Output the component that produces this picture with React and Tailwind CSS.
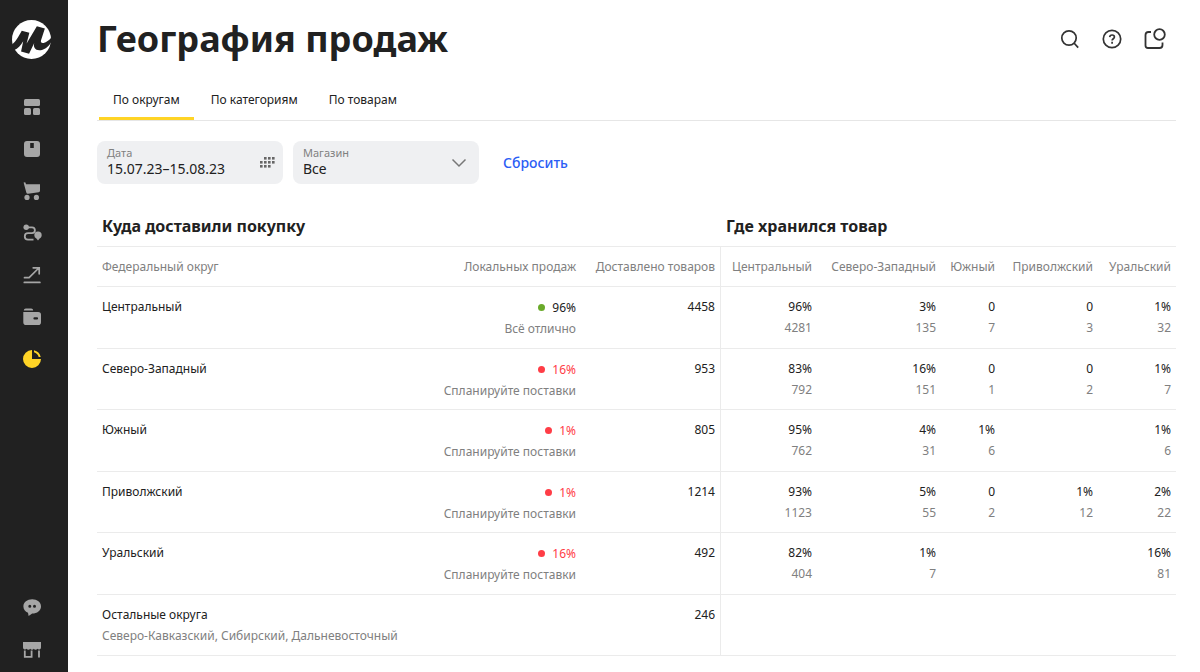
import React, { useState } from 'react';

const navItems = [
    {
        name: 'Сводка',
        icon: (
            <>
                <rect x="1" y="1" width="16" height="7" rx="1.5" />
                <rect x="1" y="10" width="7" height="7" rx="1.5" />
                <rect x="10" y="10" width="7" height="7" rx="1.5" />
            </>
        ),
    },
    {
        name: 'Товары',
        icon: <path fillRule="evenodd" d="M4 1h10a3 3 0 0 1 3 3v10a3 3 0 0 1-3 3H4a3 3 0 0 1-3-3V4a3 3 0 0 1 3-3zm3.2 2v5h3.6V3z" />,
    },
    {
        name: 'Заказы',
        icon: (
            <>
                <path d="M.6.6 2.2.3l.9 2H17v6.4a1.6 1.6 0 0 1-1.3 1.5L5 11.8a1.6 1.6 0 0 1-1.7-1.2z" />
                <circle cx="4" cy="15.4" r="2.6" />
                <circle cx="13.4" cy="15.4" r="2.6" />
            </>
        ),
    },
    {
        name: 'Логистика',
        icon: (
            <>
                <circle cx="3.2" cy="3.2" r="2.7" />
                <path
                    d="M4 3.4h5a2.9 2.9 0 0 1 0 5.800H5a3.200 3.200 0 0 0 0 6.400h5.500"
                    fill="none"
                    stroke="currentColor"
                    strokeWidth="1.800"
                />
                <path d="M15 7.600a3.700 3.700 0 0 1 3.700 3.700c0 1.500-.9 2.800-2.100 3.300L15 16.600l-1.600-2A3.600 3.600 0 0 1 11.300 11.300 3.700 3.700 0 0 1 15 7.600z" />
            </>
        ),
    },
    {
        name: 'Продвижение',
        icon: (
            <path
                d="M1.500 11.700h4.600L15.800 2M10.200 1.800h6v6M1.300 16.400h15.600"
                fill="none"
                stroke="currentColor"
                strokeWidth="1.700"
                strokeLinecap="round"
            />
        ),
    },
    {
        name: 'Финансы',
        icon: (
            <>
                <path d="M2.800.6h5.400a2 2 0 0 1 2 1.900H.8A2 2 0 0 1 2.800.6z" />
                <path
                    fillRule="evenodd"
                    d="M.3 4h14.900A2.800 2.800 0 0 1 18 6.800v7.400a2.800 2.800 0 0 1-2.800 2.800H3.100A2.800 2.800 0 0 1 .3 14.200zM11.500 9.300a1 1 0 0 0 0 2.200H14a1 1 0 0 0 0-2.200z"
                />
            </>
        ),
    },
    {
        name: 'Аналитика',
        active: true,
        icon: (
            <>
                <path d="M9 0v9h9a9 9 0 1 1-9-9z" />
                <path d="M11 .3A9 9 0 0 1 17.700 7h-2A7 7 0 0 0 11 2.300z" />
            </>
        ),
    },
];

const bottomItems = [
    {
        name: 'Чаты',
        icon: (
            <path
                fillRule="evenodd"
                d="M9.200.3c4.900 0 8.800 3 8.800 7.100s-3.900 7.100-8.800 7.100L5.600 17.100 5 13.700C2.200 12.600.4 10.300.4 7.400.4 3.300 4.300.3 9.200.3zM6.800 5.700a1.500 1.500 0 1 0 0 3 1.500 1.500 0 0 0 0-3zm4.700 0a1.500 1.500 0 1 0 0 3 1.500 1.500 0 0 0 0-3z"
            />
        ),
    },
    {
        name: 'Магазины',
        icon: (
            <>
                <path d="M0 1h18v5.500a2 2 0 0 1-3.600 1.200 2.200 2.200 0 0 1-3.600 0 2.200 2.200 0 0 1-3.600 0 2.200 2.200 0 0 1-3.600 0A2 2 0 0 1 0 6.500z" />
                <path d="M1.800 9.500v6.300h6.800V9.500M16 9.500v7" fill="none" stroke="currentColor" strokeWidth="1.800" />
            </>
        ),
    },
];

const tabs = ['По округам', 'По категориям', 'По товарам'];

const columns = ['Центральный', 'Северо-Западный', 'Южный', 'Приволжский', 'Уральский'];

const rows = [
    {
        name: 'Центральный',
        local: '96%',
        status: 'Всё отлично',
        good: true,
        total: '4458',
        stock: [['96%', '4281'], ['3%', '135'], ['0', '7'], ['0', '3'], ['1%', '32']],
    },
    {
        name: 'Северо-Западный',
        local: '16%',
        status: 'Спланируйте поставки',
        total: '953',
        stock: [['83%', '792'], ['16%', '151'], ['0', '1'], ['0', '2'], ['1%', '7']],
    },
    {
        name: 'Южный',
        local: '1%',
        status: 'Спланируйте поставки',
        total: '805',
        stock: [['95%', '762'], ['4%', '31'], ['1%', '6'], null, ['1%', '6']],
    },
    {
        name: 'Приволжский',
        local: '1%',
        status: 'Спланируйте поставки',
        total: '1214',
        stock: [['93%', '1123'], ['5%', '55'], ['0', '2'], ['1%', '12'], ['2%', '22']],
    },
    {
        name: 'Уральский',
        local: '16%',
        status: 'Спланируйте поставки',
        total: '492',
        stock: [['82%', '404'], ['1%', '7'], null, null, ['16%', '81']],
    },
    {
        name: 'Остальные округа',
        note: 'Северо-Кавказский, Сибирский, Дальневосточный',
        total: '246',
        stock: [null, null, null, null, null],
    },
];

const NavLink = ({ item }) => (
    <a href="#" aria-label={item.name} className={item.active ? 'text-[#ffd426]' : 'text-[#a6a6a6]'}>
        <svg viewBox="0 0 18 18" fill="currentColor" className="block h-[18px] w-[18px] overflow-visible">
            {item.icon}
        </svg>
    </a>
);

const Sidebar = () => (
    <aside className="flex w-[68px] shrink-0 flex-col items-center bg-[#212121] pr-[5px] pt-5 pb-[13px]">
        <a href="#" aria-label="Маркет">
            <svg viewBox="0 0 40 40" className="block h-[39px] w-[39px]">
                <circle cx="20" cy="20" r="20" fill="#fff" />
                <path
                    d="M0 25C4 22.500 6.500 17 10 11l7.800 2.200L15 24 25.500 6.500l8.200 2.300-3.900 12c-.7 2.200.6 3.200 2.600 2.700 3-.8 5.400-2.500 7.600-5V23c-3 4.800-7.300 8-12 8-4.300 0-6.400-3.300-5.200-7.400L17.500 34.500 9.300 32.200 11.500 21.800C8.800 26 6.200 29.500 2 31z"
                    fill="#212121"
                />
            </svg>
        </a>
        <nav className="mt-[39px] flex flex-col gap-6">
            {navItems.map(item => <NavLink key={item.name} item={item} />)}
        </nav>
        <nav className="mt-auto flex flex-col gap-6">
            {bottomItems.map(item => <NavLink key={item.name} item={item} />)}
        </nav>
    </aside>
);

const HeaderActions = () => (
    <div className="flex items-center gap-[22px] pr-2.5 text-[#333]">
        <button aria-label="Поиск">
            <svg viewBox="0 0 20 20" fill="none" stroke="currentColor" strokeWidth="1.700" className="block h-5 w-5">
                <circle cx="9" cy="9" r="7.200" />
                <path d="M14 14l4.200 4.600" />
            </svg>
        </button>
        <button aria-label="Помощь">
            <svg viewBox="0 0 20 20" fill="none" stroke="currentColor" strokeWidth="1.700" className="block h-5 w-5">
                <circle cx="10" cy="10" r="8.700" />
                <path d="M7.700 8.100c.1-1.400 1-2.100 2.400-2.100s2.300.8 2.300 2c0 1.700-2.300 1.800-2.300 3.600M10.100 12.800v1.900" />
            </svg>
        </button>
        <button aria-label="Уведомления">
            <svg viewBox="0 0 22 22" fill="none" stroke="currentColor" strokeWidth="1.800" className="block h-[22px] w-[22px]">
                <path d="M7 4H4.500Q1.500 4 1.500 7v10.500q0 2.500 2.500 2.500h11.500q3 0 3-3v-2.500" />
                <circle cx="15.500" cy="6.500" r="5.300" />
            </svg>
        </button>
    </div>
);

const Filters = () => (
    <div className="mt-5 flex items-center gap-2.5">
        <div className="relative h-[43px] w-[186px] rounded-lg bg-[#eff0f2] px-2.5 pt-1">
            <label htmlFor="date" className="block text-[11px] leading-4 text-[#808080]">Дата</label>
            <input
                id="date"
                type="text"
                defaultValue="15.07.23–15.08.23"
                className="block w-full bg-transparent text-sm leading-4 text-[#212121] outline-none"
            />
            <svg viewBox="0 0 15 11" fill="#666" className="pointer-events-none absolute top-4 right-2 h-[11px] w-[15px]">
                {[4, 8, 12].map(x => <rect key={x} x={x} y="0" width="2.600" height="2.600" />)}
                {[0, 4, 8, 12].map(x => <rect key={x} x={x} y="4" width="2.600" height="2.600" />)}
                {[0, 4, 8].map(x => <rect key={x} x={x} y="8" width="2.600" height="2.600" />)}
            </svg>
        </div>
        <div className="relative h-[43px] w-[186px] rounded-lg bg-[#eff0f2] px-2.5 pt-1">
            <label htmlFor="shop" className="block text-[11px] leading-4 text-[#808080]">Магазин</label>
            <select id="shop" className="block w-full appearance-none bg-transparent text-sm leading-4 text-[#212121] outline-none">
                <option>Все</option>
            </select>
            <svg viewBox="0 0 16 10" fill="none" stroke="#777" strokeWidth="1.500" className="pointer-events-none absolute top-[17px] right-3 h-2.5 w-4">
                <path d="M1.500 1.500 8 8l6.500-6.500" />
            </svg>
        </div>
        <button className="ml-[14px] text-sm font-medium text-[#2b5df5]">Сбросить</button>
    </div>
);

const SalesTable = () => (
    <table className="mt-6 w-full table-fixed border-separate border-spacing-0 text-xs leading-[21px] text-[#212121]">
        <colgroup>
            <col />
            <col className="w-[150px]" />
            <col className="w-[140px]" />
            <col className="w-[96px]" />
            <col className="w-[124px]" />
            <col className="w-[59px]" />
            <col className="w-[98px]" />
            <col className="w-[78px]" />
        </colgroup>
        <thead>
            <tr className="text-left text-base leading-6 whitespace-nowrap">
                <th colSpan={3} className="border-b border-[#ebebeb] px-[5px] pt-1.5 pb-2 font-bold">Куда доставили покупку</th>
                <th colSpan={5} className="border-b border-[#ebebeb] px-[5px] pt-1.5 pb-2 font-bold">Где хранился товар</th>
            </tr>
            <tr className="h-10 text-right whitespace-nowrap text-[#808080]">
                <th className="border-b border-[#ebebeb] px-[5px] text-left font-normal">Федеральный округ</th>
                <th className="border-b border-[#ebebeb] px-[5px] font-normal">Локальных продаж</th>
                <th className="border-r border-b border-[#ebebeb] px-[5px] font-normal">Доставлено товаров</th>
                {columns.map(c => (
                    <th key={c} className="border-b border-[#ebebeb] px-[5px] font-normal">{c}</th>
                ))}
            </tr>
        </thead>
        <tbody>
            {rows.map(row => (
                <tr key={row.name} className="text-right align-top odd:h-[62px] even:h-[61px]">
                    <td className="border-b border-[#ebebeb] px-[5px] pt-[9px] text-left whitespace-nowrap">
                        <div>{row.name}</div>
                        {row.note && <div className="text-[#808080]">{row.note}</div>}
                    </td>
                    <td className="border-b border-[#ebebeb] px-[5px] pt-2.5 whitespace-nowrap">
                        {row.local && (
                            <>
                                <div className={row.good ? 'flex items-center justify-end gap-[7px]' : 'flex items-center justify-end gap-[7px] text-[#ff3d46]'}>
                                    <span className={row.good ? 'h-[7px] w-[7px] rounded-full bg-[#6aaa2a]' : 'h-[7px] w-[7px] rounded-full bg-[#ff3d46]'}></span>
                                    {row.local}
                                </div>
                                <div className="text-[#808080]">{row.status}</div>
                            </>
                        )}
                    </td>
                    <td className="border-r border-b border-[#ebebeb] px-[5px] pt-[9px]">{row.total}</td>
                    {row.stock.map((cell, idx) => (
                        <td key={idx} className="border-b border-[#ebebeb] px-[5px] pt-[9px]">
                            {cell && (
                                <>
                                    <div>{cell[0]}</div>
                                    <div className="text-[#808080]">{cell[1]}</div>
                                </>
                            )}
                        </td>
                    ))}
                </tr>
            ))}
        </tbody>
    </table>
);

const App = () => {
    const [tab, setTab] = useState(tabs[0]);

    return (
        <div className="flex min-h-screen bg-white font-['Noto_Sans',sans-serif] text-[#212121]">
            <Sidebar />
            <main className="min-w-0 flex-1 pt-4 pr-6 pl-[29px]">
                <header className="flex items-center justify-between">
                    <h1 className="text-4xl leading-[46px] font-bold">География продаж</h1>
                    <HeaderActions />
                </header>

                <div role="tablist" className="mt-[18px] flex border-b border-[#e6e6e6] pl-0.5 text-xs">
                    {tabs.map(t => (
                        <button
                            key={t}
                            role="tab"
                            aria-selected={t === tab}
                            onClick={() => setTab(t)}
                            className={
                                t === tab
                                    ? 'mr-[3px] border-b-[3px] border-[#ffd426] px-[14px] pt-2.5 pb-[7px] leading-5'
                                    : 'mr-[3px] border-b-[3px] border-transparent px-[14px] pt-2.5 pb-[7px] leading-5'
                            }
                        >
                            {t}
                        </button>
                    ))}
                </div>

                <Filters />
                <SalesTable />
            </main>
        </div>
    );
};

export default App;
